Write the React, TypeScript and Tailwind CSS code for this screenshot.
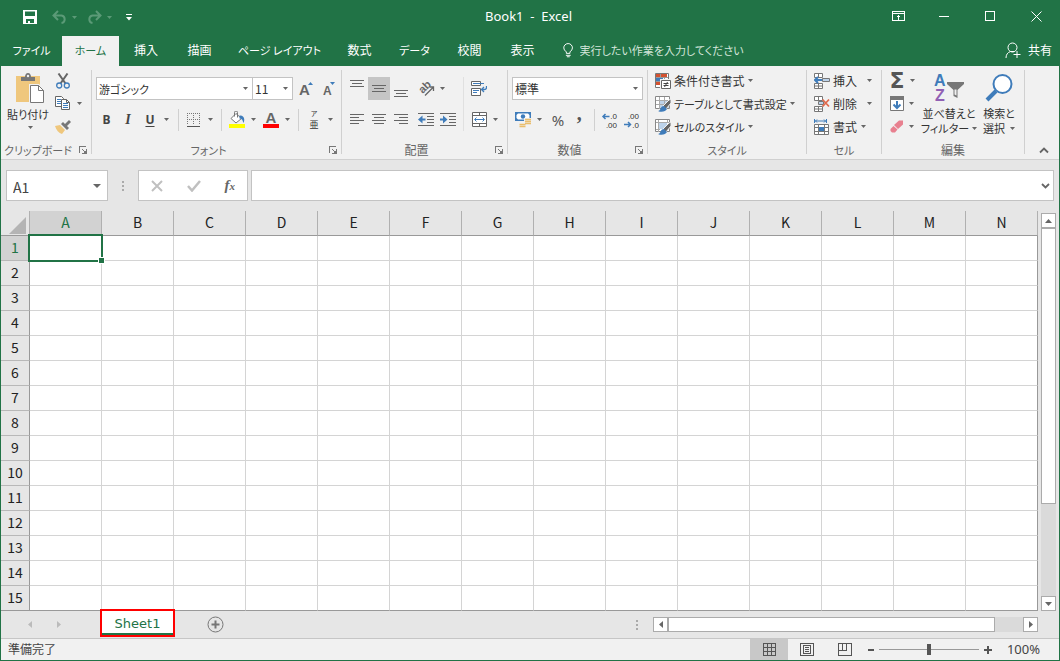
import React, { useState } from 'react';

const columns = ['A', 'B', 'C', 'D', 'E', 'F', 'G', 'H', 'I', 'J', 'K', 'L', 'M', 'N'];
const rows = Array.from({ length: 15 }, (_, i) => i + 1);

const tabs = [
  { name: 'ファイル', className: 'w-[61px] text-[11px]' },
  { name: 'ホーム', className: 'w-[57px] text-[11px]' },
  { name: '挿入', className: 'w-[54px]' },
  { name: '描画', className: 'w-[53px]' },
  { name: 'ページ レイアウト', className: 'w-[107px] text-[11px]' },
  { name: '数式', className: 'w-[53px]' },
  { name: 'データ', className: 'w-[57px] text-[11px]' },
  { name: '校閲', className: 'w-[53px]' },
  { name: '表示', className: 'w-[53px]' },
];

/* ---------- small parts ---------- */

const Caret: React.FC<{ className?: string }> = ({ className = 'text-[#666]' }) => (
  <svg width="5" height="3" viewBox="0 0 5 3" className={`shrink-0 ${className}`}>
    <path d="M0 0h5L2.5 3z" fill="currentColor" />
  </svg>
);

const CaretButton: React.FC<{ label: string; className?: string }> = ({ label, className = 'w-[11px]' }) => (
  <button aria-label={label} className={`flex h-[23px] shrink-0 items-center justify-center ${className}`}>
    <Caret />
  </button>
);

const IconButton: React.FC<{ label: string; className?: string; children: React.ReactNode }> = ({
  label,
  className = 'w-[22px]',
  children,
}) => (
  <button aria-label={label} className={`flex h-[23px] shrink-0 items-center justify-center ${className}`}>
    {children}
  </button>
);

const Divider: React.FC = () => <div className="h-[22px] w-px shrink-0 bg-[#d0d0d0]" />;

const Combo: React.FC<{ label: string; value: string; className: string }> = ({ label, value, className }) => (
  <div className={`relative h-[23px] shrink-0 ${className}`}>
    <select
      aria-label={label}
      defaultValue={value}
      className="h-full w-full appearance-none border border-[#c3c3c3] bg-white pl-0.5 text-[#333] outline-none"
    >
      <option>{value}</option>
    </select>
    <Caret className="pointer-events-none absolute top-[10px] right-[5px] text-[#666]" />
  </div>
);

const Group: React.FC<{
  name: string;
  className: string;
  nameClass?: string;
  launcher?: boolean;
  children: React.ReactNode;
}> = ({ name, className, nameClass = '', launcher, children }) => (
  <section aria-label={name} className={`flex shrink-0 ${className}`}>
    <div className="flex min-w-0 flex-1 flex-col">
      <div className="flex-1">{children}</div>
      <div className="flex h-4 items-center">
        <div className={`flex-1 text-center whitespace-nowrap text-[#666] ${launcher ? 'pr-1' : ''} ${nameClass}`}>
          {name}
        </div>
        {launcher && (
          <button aria-label={`${name}の設定`} className="mr-1 flex w-2 shrink-0 items-center">
            <svg width="8" height="8" viewBox="0 0 8 8" shapeRendering="crispEdges">
              <path d="M.5 7V.5H7M3 3l3 3" fill="none" stroke="#777" />
              <path d="M7 3h1v5H3V7h1l3-3z" fill="#777" />
            </svg>
          </button>
        )}
      </div>
    </div>
    <div className="mt-px h-[84px] w-px shrink-0 bg-[#d0d0d0]" />
  </section>
);

const Lines: React.FC<{ d: string }> = ({ d }) => (
  <svg width="14" height="18" viewBox="0 0 14 18" shapeRendering="crispEdges">
    <path d={d} stroke="#666" fill="none" />
  </svg>
);

/* ---------- icons ---------- */

const PasteIcon = () => (
  <svg width="28" height="31" viewBox="0 0 28 31" className="ml-1">
    <path d="M0 3h24v26H0z" fill="#efc77d" />
    <path d="M5 8V4h4c0-2 1-4 3-4s3 2 3 4h4v4z" fill="#777" />
    <circle cx="12" cy="3" r="1.2" fill="#f1f1f1" />
    <path d="M13 11h10l6 6v14H13z" fill="#f1f1f1" />
    <path d="M14.5 12.5h8l5 5v12h-13z" fill="#fff" stroke="#777" />
    <path d="M22.5 12.5v5h5" fill="none" stroke="#777" />
  </svg>
);

const CutIcon = () => (
  <svg width="14" height="16" viewBox="0 0 14 16">
    <path d="M2.5.5 9.5 10.5M11.5.5 4.5 10.5" stroke="#666" strokeWidth="2" />
    <circle cx="3.2" cy="12.5" r="2.5" fill="none" stroke="#3f7cba" strokeWidth="1.3" />
    <circle cx="10.8" cy="12.5" r="2.5" fill="none" stroke="#3f7cba" strokeWidth="1.3" />
  </svg>
);

const CopyIcon = () => (
  <svg width="16" height="15" viewBox="0 0 16 15">
    <path d="M.5.5h6l2 2v8h-8z" fill="#fff" stroke="#666" />
    <path d="M2 3.5h4M2 5.5h4M2 7.5h4" stroke="#3f7cba" />
    <path d="M6.5 3.5h5l3 3v7h-8z" fill="#fff" stroke="#666" />
    <path d="M11.5 3.5v3h3" fill="none" stroke="#666" />
    <path d="M8 7.5h5M8 9.5h5M8 11.5h5" stroke="#3f7cba" />
  </svg>
);

const BrushIcon = () => (
  <svg width="16" height="14" viewBox="0 0 16 14">
    <path d="m0 6 5-1 5 5-3 4C4 13 1 10 0 6z" fill="#efc77d" />
    <path d="m6 4 2-2 2 2 4-4 2 2-4 4 2 2-2 2z" fill="#777" />
  </svg>
);

const BordersIcon = () => (
  <svg width="14" height="14" viewBox="0 0 14 14" shapeRendering="crispEdges">
    <path d="M0 .5h13M0 6.5h13M.5 0v12M6.5 0v12M12.5 0v12" stroke="#777" strokeDasharray="1 1" fill="none" />
    <path d="M0 13.5h13" stroke="#555" />
  </svg>
);

const FillIcon = () => (
  <svg width="16" height="17" viewBox="0 0 16 17">
    <path d="m7 2.5 5.5 5L7 12 2 7.5z" fill="#fff" stroke="#777" />
    <path d="M5.5 5.5v-4a1.5 1.5 0 0 1 3 0v5" fill="none" stroke="#777" />
    <path d="M10.5 4.5c4-.5 6 3 4 7.5-1-2-.5-4-4-4.500z" fill="#3f7cba" />
    <path d="M0 13h16v4H0z" fill="#ffff00" />
  </svg>
);

const FontColorIcon = () => (
  <svg width="16" height="17" viewBox="0 0 16 17" className="overflow-visible">
    <text x="8" y="12" textAnchor="middle" fontSize="15" fontWeight="700" fill="#666" className="font-['Liberation_Sans']">
      A
    </text>
    <path d="M0 13h16v4H0z" fill="#f00" />
  </svg>
);

const OrientationIcon = () => (
  <svg width="17" height="16" viewBox="0 0 17 16" className="overflow-visible">
    <text x="3" y="13" fontSize="11" fontWeight="700" fill="#666" transform="rotate(-45 4 11)" className="font-['Liberation_Sans']">
      ab
    </text>
    <path d="M7 14.5 15 6.5M11.5 6h4v4" stroke="#666" strokeWidth="1.3" fill="none" />
  </svg>
);

const IndentIcon: React.FC<{ increase?: boolean }> = ({ increase }) => (
  <svg width="16" height="14" viewBox="0 0 16 14">
    <path d="M0 .5h16M9 3.5h7M9 6.5h7M9 9.5h7M0 12.5h16" stroke="#666" shapeRendering="crispEdges" />
    {increase ? (
      <path d="M0 5.5h3v-3l4.5 4L3 10.5v-3H0z" fill="#3f7cba" />
    ) : (
      <path d="M7.5 5.5h-3v-3L0 6.5l4.5 4v-3h3z" fill="#3f7cba" />
    )}
  </svg>
);

const WrapIcon = () => (
  <svg width="16" height="16" viewBox="0 0 16 16">
    <path d="M.5.5h9v4h-9zM.5 7.5h9v7h-9z" fill="#fff" stroke="#666" />
    <path d="M2 2.5h11M2 9.5h6M2 11.5h4" stroke="#3f7cba" />
    <path d="M15.5 5v1.5q0 2-2 2H11M13 6l-2.500 2.500L13 11" stroke="#3f7cba" strokeWidth="1.3" fill="none" />
  </svg>
);

const MergeIcon = () => (
  <svg width="15" height="15" viewBox="0 0 15 15">
    <path d="M.5.5h14v14H.5zM.5 3.5h14M.5 11.5h14M7.5.5v3M7.5 11.5v3" fill="#fff" stroke="#666" />
    <path d="M3 7.5h9M4.5 5.5l-2 2 2 2M10.5 5.5l2 2-2 2" stroke="#3f7cba" fill="none" />
  </svg>
);

const CurrencyIcon = () => (
  <svg width="17" height="16" viewBox="0 0 17 16">
    <path d="M0 0h16v9H0z" fill="#3f7cba" />
    <path d="M3 1.5h10L14.5 3v3L13 7.5H3L1.5 6V3z" fill="#fff" />
    <circle cx="8" cy="4.5" r="2.2" fill="#3f7cba" />
    <path d="M9 6h8v9H9zM4 10h7v6H4z" fill="#f1f1f1" />
    <path d="M10 7.5h6M10 9.5h6M10 11.5h6M4.5 12.5h6M4.5 14.5h6" stroke="#e9bd6c" strokeWidth="1.5" />
  </svg>
);

const DecimalIcon: React.FC<{ increase?: boolean }> = ({ increase }) => (
  <svg width="16" height="16" viewBox="0 0 16 16" className="overflow-visible font-['Liberation_Sans']" fontSize="8" fill="#333">
    <text x="15" y="7" textAnchor="end">
      {increase ? '.0' : '.00'}
    </text>
    <text x="15" y="16" textAnchor="end">
      {increase ? '.00' : '.0'}
    </text>
    {increase ? (
      <path d="M7.5 4.5H1M3.5 2 1 4.5 3.5 7" stroke="#3f7cba" strokeWidth="1.5" fill="none" />
    ) : (
      <path d="M0 12.5h6.5M4 10l2.5 2.5L4 15" stroke="#3f7cba" strokeWidth="1.5" fill="none" />
    )}
  </svg>
);

const ConditionalIcon = () => (
  <svg width="16" height="16" viewBox="0 0 16 16">
    <path d="M.5.5h13v14H.5z" fill="#fff" stroke="#777" />
    <path d="M1 4.5h12M1 8.5h12M5.5 1v13M9.5 1v13" stroke="#999" />
    <path d="M1 1h4v3H1zM6 1h6v3H6z" fill="#d35230" />
    <path d="M1 5h7v3H1z" fill="#3f7cba" />
    <path d="M1 9h4v3H1z" fill="#d35230" />
    <path d="M5 6h11v10H5z" fill="#f1f1f1" />
    <path d="M6.5 7.5h9v8h-9z" fill="#fff" stroke="#666" />
    <path d="M8.5 10.5h5M8.5 12.5h5M12.5 9l-3 5" stroke="#444" />
  </svg>
);

const StyleIcon: React.FC<{ table?: boolean }> = ({ table }) => (
  <svg width="16" height="16" viewBox="0 0 16 16">
    <path d="M.5.5h14v12H.5z" fill="#fff" stroke="#888" />
    {table ? <path d="M5 5h9v7H5z" fill="#bdd3ea" /> : <path d="M4 4h8v6H4z" fill="#bdd3ea" />}
    {table ? (
      <path d="M1 4.5h13M1 8.5h13M4.5 1v12M9.5 1v12" stroke="#aaa" />
    ) : (
      <path d="M1 3.5h13M3.5 1v12M12.5 1v3M1 10.5h4" stroke="#aaa" />
    )}
    <path d="M16 3v4l-5 6-3-3 6-6z" fill="#666" stroke="#f1f1f1" />
    <path d="M3 15c3 0 2-5 6-5l3 3c-1 2-5 4-9 2z" fill="#3f7cba" />
  </svg>
);

const InsertIcon = () => (
  <svg width="16" height="16" viewBox="0 0 16 16">
    <path d="M.5.5h8v4h-8zM4.5.5v4M.5 10.5h8v5h-8zM4.5 10.5v5M.5 13h8" fill="#fff" stroke="#777" />
    <path d="M8.5 5.5h7v3h-7z" fill="#bdd3ea" stroke="#777" />
    <path d="M8 7H1M4 4 1 7l3 3" stroke="#3f7cba" strokeWidth="2" fill="none" />
  </svg>
);

const DeleteIcon = () => (
  <svg width="16" height="16" viewBox="0 0 16 16">
    <path d="M.5.5h8v4h-8zM4.5.5v4M.5 10.5h8v5h-8zM4.5 10.5v5M.5 13h8" fill="#fff" stroke="#777" />
    <path d="M4.5 5.5h5v3h-5z" fill="#bdd3ea" stroke="#777" />
    <path d="m8.5 3.5 6.500 7M15 3.5l-6.500 7" stroke="#e0694c" strokeWidth="1.8" />
  </svg>
);

const FormatIcon = () => (
  <svg width="15" height="16" viewBox="0 0 15 16">
    <path d="M.5 5.500h14v10H.5zM.5 8.500h14M.5 12.500h14M4.500 5.500v10M10.500 5.500v10" fill="#fff" stroke="#777" />
    <path d="M5 8h5v4H5z" fill="#3f7cba" />
    <path d="M.5 0v4M12.5 0v4M1 2h11M3 .5 1.500 2 3 3.500M10 .5 11.500 2 10 3.500" stroke="#3f7cba" fill="none" />
  </svg>
);

const FillDownIcon = () => (
  <svg width="14" height="15" viewBox="0 0 14 15">
    <path d="M.5.5h13v14H.5z" fill="#fff" stroke="#777" />
    <path d="M0 0h14v4H0z" fill="#777" />
    <path d="M7 5v7M3.5 8.5 7 12l3.500-3.500" stroke="#3f7cba" strokeWidth="2" fill="none" />
  </svg>
);

const EraserIcon = () => (
  <svg width="14" height="13" viewBox="0 0 14 13">
    <path d="m4 5 5-4.500h4v4L8 9z" fill="#e8808f" />
    <path d="M3.5 6 7.5 9.500 5 12.500H2L.5 11V9z" fill="#e8808f" />
  </svg>
);

const SortFilterIcon = () => (
  <svg width="30" height="28" viewBox="0 0 30 28" className="overflow-visible font-['Liberation_Sans']" fontSize="16" fontWeight="700">
    <text x="0" y="12" fill="#3f7cba">
      A
    </text>
    <text x="1" y="27" fill="#9160b4">
      Z
    </text>
    <path d="M13 8h17v2l-6.500 6v8l-4-2v-6L13 10z" fill="#777" />
    <path d="M20.500 15.500h2v6l-2-1z" fill="#f1f1f1" />
  </svg>
);

const SearchIcon = () => (
  <svg width="28" height="28" viewBox="0 0 28 28">
    <path d="m11 17-9 9" stroke="#3f7cba" strokeWidth="4" />
    <circle cx="17.5" cy="10" r="9" fill="#fff" stroke="#3f7cba" strokeWidth="2" />
  </svg>
);

const Dots = () => (
  <svg width="2" height="10" viewBox="0 0 2 10" shapeRendering="crispEdges">
    <path d="M0 0h2v2H0zM0 4h2v2H0zM0 8h2v2H0z" fill="#aaa" />
  </svg>
);

/* ---------- sections ---------- */

const TitleBar = () => (
  <header className="grid h-[35px] shrink-0 grid-cols-[1fr_auto_1fr] text-white">
    <div className="flex h-8 items-center pl-[22px]">
      <button aria-label="上書き保存">
        <svg width="14" height="14" viewBox="0 0 14 14">
          <path d="M0 0h14v14H0zM2 1.5V6h10V1.5zM3 9v4h2v-2h2v2h4V9z" fill="#fff" fillRule="evenodd" />
        </svg>
      </button>
      <button aria-label="元に戻す" className="ml-[15px] flex items-center gap-[5px] text-[#5b9a77]">
        <svg width="15" height="14" viewBox="0 0 15 14">
          <path d="M6 1 1.5 5.5 6 10M2 5.5h7.500a3.800 3.800 0 0 1 0 7.500" fill="none" stroke="currentColor" strokeWidth="2" />
        </svg>
        <Caret className="text-[#5b9a77]" />
      </button>
      <button aria-label="やり直し" className="ml-[10px] flex items-center gap-[5px] text-[#5b9a77]">
        <svg width="15" height="14" viewBox="0 0 15 14">
          <path d="m9 1 4.500 4.500L9 10M13 5.500H5.500a3.800 3.800 0 0 0 0 7.500" fill="none" stroke="currentColor" strokeWidth="2" />
        </svg>
        <Caret className="text-[#5b9a77]" />
      </button>
      <button aria-label="クイック アクセス ツール バーのユーザー設定" className="ml-[14px]">
        <svg width="6" height="7" viewBox="0 0 6 7">
          <path d="M0 0h6v1H0zM0 3h6L3 6.5z" fill="#fff" />
        </svg>
      </button>
    </div>
    <h1 className="flex h-[30px] items-center pr-[3px] font-['Noto_Sans'] text-[13px] whitespace-pre">Book1  -  Excel</h1>
    <div className="flex h-[30px] justify-end">
      <button aria-label="リボンの表示オプション" className="flex w-[46px] items-center justify-center">
        <svg width="13" height="10" viewBox="0 0 13 10" shapeRendering="crispEdges">
          <path d="M.5.5h12v9H.5zM.5 2.5h12M6.5 4v5M4.5 6.5l2-2 2 2" fill="none" stroke="#fff" />
        </svg>
      </button>
      <button aria-label="最小化" className="flex w-[46px] items-center justify-center">
        <span className="h-px w-[10px] bg-white" />
      </button>
      <button aria-label="最大化" className="flex w-[46px] items-center justify-center">
        <span className="size-[10px] border border-white" />
      </button>
      <button aria-label="閉じる" className="flex w-[46px] items-center justify-center">
        <svg width="11" height="11" viewBox="0 0 11 11">
          <path d="m.5.5 10 10M10.5.5l-10 10" stroke="#fff" />
        </svg>
      </button>
    </div>
  </header>
);

const TabBar: React.FC = () => {
  const [active, setActive] = useState('ホーム');

  return (
    <nav className="flex h-[30px] shrink-0 text-white">
      {tabs.map((tab) => (
        <button
          key={tab.name}
          onClick={() => setActive(tab.name)}
          className={`shrink-0 pb-0.5 whitespace-nowrap ${tab.className} ${active === tab.name ? 'bg-[#f1f1f1] text-[#217346]' : ''}`}
        >
          {tab.name}
        </button>
      ))}
      <label className="ml-[14px] flex flex-1 items-center gap-[6px] pb-0.5">
        <svg width="11" height="15" viewBox="0 0 11 15">
          <path d="M3.5 10.5V9Q.8 7 .8 4.800a4.500 4.500 0 0 1 9 0Q9.800 7 7.200 9v1.500zM3 12.500h5M4 14h3" fill="none" stroke="#fff" />
        </svg>
        <input
          aria-label="操作アシスト"
          placeholder="実行したい作業を入力してください"
          className="w-full bg-transparent text-[11px] outline-none placeholder:text-[#d3e5da]"
        />
      </label>
      <button className="flex items-center gap-[7px] pr-[7px] pb-0.5">
        <svg width="16" height="17" viewBox="0 0 16 17">
          <circle cx="7.5" cy="5.5" r="4.5" fill="none" stroke="#fff" />
          <path d="M1 16q0-5 4.500-6.500h4M12 9v7M8.500 12.500h7" fill="none" stroke="#fff" />
        </svg>
        共有
      </button>
    </nav>
  );
};

const Ribbon = () => (
  <div className="flex h-[94px] shrink-0 overflow-hidden border-b border-[#d0d0d0] bg-[#f1f1f1] pt-[3px] pb-px text-[#333]">
    <Group name="クリップボード" nameClass="text-[11px]" launcher className="w-[91px]">
      <div className="flex">
        <button className="flex w-[54px] flex-col items-center pt-1">
          <PasteIcon />
          <span className="text-[11px] leading-[20px] whitespace-nowrap">貼り付け</span>
          <span className="flex h-[7px] items-center pl-1">
            <Caret />
          </span>
        </button>
        <div className="flex flex-col">
          <IconButton label="切り取り" className="w-4"><CutIcon /></IconButton>
          <div className="flex">
            <IconButton label="コピー" className="w-4"><CopyIcon /></IconButton>
            <CaretButton label="コピーのオプション" className="w-[16px]" />
          </div>
          <IconButton label="書式のコピー/貼り付け" className="w-4"><BrushIcon /></IconButton>
        </div>
      </div>
    </Group>

    <Group name="フォント" nameClass="text-[11px]" launcher className="w-[250px]">
      <div className="flex flex-col gap-2 pt-2 pl-1">
        <div className="flex">
          <Combo label="フォント" value="游ゴシック" className="w-[157px] text-[11px]" />
          <Combo label="フォント サイズ" value="11" className="-ml-px w-[41px] text-[12px]" />
          <IconButton label="フォント サイズの拡大" className="ml-0.5 w-6">
            <svg width="16" height="16" viewBox="0 0 16 16" className="overflow-visible">
              <text x="0" y="14" fontSize="15" fontWeight="700" fill="#666" className="font-['Liberation_Sans']">A</text>
              <path d="M9 4h5l-2.500-3z" fill="#3f7cba" />
            </svg>
          </IconButton>
          <IconButton label="フォント サイズの縮小">
            <svg width="14" height="16" viewBox="0 0 14 16" className="overflow-visible">
              <text x="0" y="14" fontSize="12" fontWeight="700" fill="#666" className="font-['Liberation_Sans']">A</text>
              <path d="M7 1h5L9.500 4z" fill="#3f7cba" />
            </svg>
          </IconButton>
        </div>
        <div className="flex items-center font-['Noto_Sans'] text-[#444]">
          <IconButton label="太字" className="w-[21px] font-bold">B</IconButton>
          <IconButton label="斜体" className="w-[22px] font-['Liberation_Serif'] text-[14px] font-bold italic">I</IconButton>
          <IconButton label="下線" className="w-[22px] font-bold underline underline-offset-2">U</IconButton>
          <CaretButton label="下線の種類" />
          <div className="w-[6px]" />
          <Divider />
          <IconButton label="罫線" className="w-[29px]"><BordersIcon /></IconButton>
          <CaretButton label="罫線の種類" className="w-[5px]" />
          <div className="w-[8px]" />
          <Divider />
          <IconButton label="塗りつぶしの色" className="w-[29px]"><FillIcon /></IconButton>
          <CaretButton label="塗りつぶしの色の選択" className="w-[5px]" />
          <IconButton label="フォントの色" className="w-[29px]"><FontColorIcon /></IconButton>
          <CaretButton label="フォントの色の選択" className="w-[5px]" />
          <div className="w-[8px]" />
          <Divider />
          <IconButton label="ふりがなの表示" className="w-[29px]">
            <svg width="10" height="18" viewBox="0 0 10 18" className="overflow-visible font-['Noto_Sans_CJK_JP']" fill="#333">
              <text x="5" y="5" textAnchor="middle" fontSize="7">ア</text>
              <text x="5" y="17" textAnchor="middle" fontSize="9">亜</text>
            </svg>
          </IconButton>
          <CaretButton label="ふりがなの設定" className="w-[5px]" />
        </div>
      </div>
    </Group>

    <Group name="配置" launcher className="w-[166px]">
      <div className="flex pt-2 pl-1">
        <div className="flex w-[117px] flex-col gap-2">
          <div className="flex">
            <IconButton label="上揃え"><Lines d="M0 .5h14M2 3.5h10M0 6.5h14" /></IconButton>
            <IconButton label="上下中央揃え" className="w-[22px] bg-[#c5c5c5]"><Lines d="M0 5.5h14M2 8.5h10M0 11.5h14" /></IconButton>
            <IconButton label="下揃え"><Lines d="M0 10.5h14M2 13.5h10M0 16.5h14" /></IconButton>
            <IconButton label="方向" className="w-[28px]"><OrientationIcon /></IconButton>
            <CaretButton label="方向の選択" className="w-[5px]" />
          </div>
          <div className="flex">
            <IconButton label="左揃え"><Lines d="M0 3.5h14M0 6.5h9M0 9.5h14M0 12.5h9" /></IconButton>
            <IconButton label="中央揃え"><Lines d="M0 3.5h14M2 6.5h10M0 9.5h14M2 12.5h10" /></IconButton>
            <IconButton label="右揃え"><Lines d="M0 3.5h14M5 6.5h9M0 9.5h14M5 12.5h9" /></IconButton>
            <IconButton label="インデントを減らす" className="w-[28px]"><IndentIcon /></IconButton>
            <IconButton label="インデントを増やす" className="w-[16px]"><IndentIcon increase /></IconButton>
          </div>
        </div>
        <div className="h-[54px] w-px bg-[#e0e0e0]" />
        <div className="flex flex-col gap-2 pl-[7px]">
          <IconButton label="折り返して全体を表示する" className="w-4"><WrapIcon /></IconButton>
          <div className="flex">
            <IconButton label="セルを結合して中央揃え" className="w-4"><MergeIcon /></IconButton>
            <CaretButton label="結合の種類" className="w-[16px]" />
          </div>
        </div>
      </div>
    </Group>

    <Group name="数値" launcher className="w-[140px]">
      <div className="flex flex-col gap-2 pt-2 pl-1">
        <Combo label="数値の書式" value="標準" className="w-[131px] text-[12px]" />
        <div className="flex items-center font-['Noto_Sans'] text-[#555]">
          <IconButton label="通貨表示形式"><CurrencyIcon /></IconButton>
          <CaretButton label="通貨の選択" />
          <IconButton label="パーセント スタイル" className="w-[26px] text-[15px]">%</IconButton>
          <IconButton label="桁区切りスタイル" className="w-[16px] pt-2 font-['Liberation_Serif'] text-[20px] font-bold">’</IconButton>
          <div className="w-[7px]" />
          <Divider />
          <IconButton label="小数点以下の表示桁数を増やす" className="w-[29px]"><DecimalIcon increase /></IconButton>
          <IconButton label="小数点以下の表示桁数を減らす" className="w-[16px]"><DecimalIcon /></IconButton>
        </div>
      </div>
    </Group>

    <Group name="スタイル" nameClass="text-[11px]" className="w-[159px]">
      <div className="flex flex-col items-start pl-[7px] whitespace-nowrap">
        <button className="flex h-[23px] items-center gap-[3px]"><ConditionalIcon />条件付き書式<Caret /></button>
        <button className="flex h-[23px] items-center gap-[3px] text-[11px]"><StyleIcon table />テーブルとして書式設定<Caret /></button>
        <button className="flex h-[23px] items-center gap-[3px] text-[11px]"><StyleIcon />セルのスタイル<Caret /></button>
      </div>
    </Group>

    <Group name="セル" nameClass="text-[11px]" className="w-[75px]">
      <div className="flex flex-col pl-[7px] whitespace-nowrap">
        <div className="flex">
          <button className="flex h-[23px] items-center gap-[3px]"><InsertIcon />挿入</button>
          <CaretButton label="挿入の種類" className="w-6" />
        </div>
        <div className="flex">
          <button className="flex h-[23px] items-center gap-[3px]"><DeleteIcon />削除</button>
          <CaretButton label="削除の種類" className="w-6" />
        </div>
        <button className="flex h-[23px] items-center gap-1"><FormatIcon />書式<Caret /></button>
      </div>
    </Group>

    <Group name="編集" className="w-[143px]">
      <div className="flex pl-[7px]">
        <div className="flex w-[33px] flex-col">
          <div className="flex">
            <IconButton label="オート SUM" className="w-4 font-['DejaVu_Sans'] text-[22px] font-bold text-[#555]">Σ</IconButton>
            <CaretButton label="集計の種類" className="w-[15px]" />
          </div>
          <div className="flex">
            <IconButton label="フィル" className="w-4"><FillDownIcon /></IconButton>
            <CaretButton label="フィルの種類" className="w-[13px]" />
          </div>
          <div className="flex">
            <IconButton label="クリア" className="w-4"><EraserIcon /></IconButton>
            <CaretButton label="クリアの種類" className="w-[13px]" />
          </div>
        </div>
        <button className="flex w-[54px] flex-col items-center pt-[5px] text-[11px] leading-[15px] whitespace-nowrap">
          <SortFilterIcon />
          <span className="pt-1">並べ替えと</span>
          <span className="flex items-center gap-[3px]">フィルター<Caret /></span>
        </button>
        <button className="flex w-[46px] flex-col items-center pt-[5px] text-[11px] leading-[15px] whitespace-nowrap">
          <SearchIcon />
          <span className="pt-1">検索と</span>
          <span className="flex items-center gap-[5px]">選択<Caret /></span>
        </button>
      </div>
    </Group>

    <div className="flex flex-1 items-end justify-end pr-[10px] pb-1">
      <button aria-label="リボンを折りたたむ">
        <svg width="10" height="7" viewBox="0 0 10 7">
          <path d="m1 5.500 4-4 4 4" stroke="#666" strokeWidth="1.8" fill="none" />
        </svg>
      </button>
    </div>
  </div>
);

const FormulaBar = () => (
  <div className="flex h-[51px] shrink-0 px-[5px] pt-[10px]">
    <div className="flex h-[31px] w-[102px] shrink-0 items-center border border-[#c3c3c3] bg-white">
      <input
        aria-label="名前ボックス"
        defaultValue="A1"
        className="w-0 flex-1 pt-0.5 pl-[6px] font-['Noto_Sans_CJK_JP'] text-[14px] text-[#444] outline-none"
      />
      <button aria-label="名前の一覧" className="flex w-5 justify-center">
        <svg width="8" height="4" viewBox="0 0 8 4">
          <path d="M0 0h8L4 4z" fill="#666" />
        </svg>
      </button>
    </div>
    <div className="flex h-[31px] w-[30px] shrink-0 items-center justify-center">
      <Dots />
    </div>
    <div className="flex h-[31px] w-[110px] shrink-0 items-center justify-around border border-[#c3c3c3] bg-white">
      <button aria-label="キャンセル">
        <svg width="12" height="12" viewBox="0 0 12 12">
          <path d="m1 1 10 10M11 1 1 11" stroke="#c0c0c0" strokeWidth="2" />
        </svg>
      </button>
      <button aria-label="入力">
        <svg width="14" height="12" viewBox="0 0 14 12">
          <path d="m1 6 4 4.500L13 1" stroke="#c0c0c0" strokeWidth="2.5" fill="none" />
        </svg>
      </button>
      <button aria-label="関数の挿入" className="font-['Liberation_Serif'] text-[15px] font-bold text-[#666] italic">
        f<span className="text-[11px]">x</span>
      </button>
    </div>
    <div className="ml-[3px] flex h-[31px] flex-1 items-center border border-[#c3c3c3] bg-white">
      <input aria-label="数式バー" className="h-full flex-1 px-2 outline-none" />
      <button aria-label="数式バーの展開" className="pr-[3px]">
        <svg width="9" height="6" viewBox="0 0 9 6">
          <path d="m1 1 3.500 3.500L8 1" stroke="#666" strokeWidth="1.8" fill="none" />
        </svg>
      </button>
    </div>
  </div>
);

const Sheet = () => (
  <div className="flex shrink-0">
    <div className="flex-1">
      <table className="w-full table-fixed border-separate border-spacing-0 font-['Noto_Sans_CJK_JP'] text-[14px] leading-[20px] text-[#222]">
        <thead>
          <tr className="h-[25px]">
            <th aria-label="すべて選択" className="w-[29px] border-r border-b border-[#b0b0b0] border-b-[#999] p-0">
              <svg width="17" height="17" viewBox="0 0 17 17" className="mt-1 ml-2">
                <path d="M17 0v17H0z" fill="#b4b4b4" />
              </svg>
            </th>
            {columns.map((column) => (
              <th
                key={column}
                scope="col"
                className={`border-r border-b border-r-[#b0b0b0] border-b-[#999] p-0 pb-0.5 font-normal ${
                  column === 'A' ? 'bg-[#d2d2d2] text-[#217346]' : ''
                }`}
              >
                {column}
              </th>
            ))}
          </tr>
        </thead>
        <tbody>
          {rows.map((row) => (
            <tr key={row} className="h-[25px]">
              <th
                scope="row"
                className={`border-r border-b border-r-[#999] p-0 pb-0.5 font-normal ${
                  row === 15 ? 'border-b-[#999]' : 'border-b-[#b8b8b8]'
                } ${row === 1 ? 'bg-[#d2d2d2] text-[#217346]' : ''}`}
              >
                {row}
              </th>
              {columns.map((column) => (
                <td
                  key={column}
                  className={`relative border-r border-b bg-white p-0 ${row === 15 ? 'border-b-[#999]' : 'border-b-[#d4d4d4]'} ${
                    column === 'N' ? 'border-r-[#999]' : 'border-r-[#d4d4d4]'
                  }`}
                >
                  {row === 1 && column === 'A' && (
                    <div className="absolute -inset-0.5 z-10 border-2 border-[#217346]">
                      <div className="absolute -right-[4px] -bottom-[4px] size-[7px] border border-white bg-[#217346]" />
                    </div>
                  )}
                </td>
              ))}
            </tr>
          ))}
        </tbody>
      </table>
    </div>
    <div className="flex w-[21px] shrink-0 flex-col px-[3px] pt-[2px]">
      <button aria-label="上へスクロール" className="flex h-[15px] items-center justify-center border border-[#ababab] bg-white">
        <svg width="7" height="4" viewBox="0 0 7 4"><path d="M0 4h7L3.500 0z" fill="#666" /></svg>
      </button>
      <div className="flex-1 bg-[#dadada]">
        <div className="h-3/4 border border-[#ababab] bg-white" />
      </div>
      <button aria-label="下へスクロール" className="flex h-[15px] items-center justify-center border border-[#ababab] bg-white">
        <svg width="7" height="4" viewBox="0 0 7 4"><path d="M0 0h7L3.500 4z" fill="#666" /></svg>
      </button>
    </div>
  </div>
);

const SheetBar = () => (
  <div className="flex h-7 shrink-0 border-b border-[#c6c6c6]">
    <div className="flex w-[99px] shrink-0 items-center gap-[25px] pl-[27px]">
      <button aria-label="前のシート">
        <svg width="4" height="7" viewBox="0 0 4 7"><path d="M4 0v7L0 3.500z" fill="#bbb" /></svg>
      </button>
      <button aria-label="次のシート">
        <svg width="4" height="7" viewBox="0 0 4 7"><path d="M0 0v7l4-3.500z" fill="#bbb" /></svg>
      </button>
    </div>
    <div className="z-10 -mt-0.5 h-7 w-[75px] shrink-0 border-2 border-[#f00] bg-white">
      <button className="h-full w-full border-b-2 border-[#217346] pt-1 font-['DejaVu_Sans'] text-[13px] text-[#217346]">Sheet1</button>
    </div>
    <button aria-label="新しいシート" className="ml-8">
      <svg width="17" height="17" viewBox="0 0 17 17">
        <circle cx="8.5" cy="8.5" r="7.5" fill="none" stroke="#777" />
        <path d="M8.5 4.5v8M4.5 8.5h8" stroke="#777" strokeWidth="2" />
      </svg>
    </button>
    <div className="flex flex-1 items-center justify-end pr-[15px]"><Dots /></div>
    <div className="mt-[6px] mr-[21px] flex h-[15px] w-[385px] shrink-0 bg-[#dadada]">
      <button aria-label="左へスクロール" className="flex w-[15px] items-center justify-center border border-[#ababab] bg-white">
        <svg width="4" height="7" viewBox="0 0 4 7"><path d="M4 0v7L0 3.500z" fill="#666" /></svg>
      </button>
      <div className="flex-1">
        <div className="h-full w-[92%] border border-[#ababab] bg-white" />
      </div>
      <button aria-label="右へスクロール" className="flex w-[15px] items-center justify-center border border-[#ababab] bg-white">
        <svg width="4" height="7" viewBox="0 0 4 7"><path d="M0 0v7l4-3.500z" fill="#666" /></svg>
      </button>
    </div>
  </div>
);

const StatusBar: React.FC = () => {
  const [zoom, setZoom] = useState(100);

  return (
    <footer className="flex min-h-[21px] flex-1 items-stretch bg-[#f1f1f1] text-[#444]">
      <div className="flex flex-1 items-center pb-px pl-[7px]">準備完了</div>
      <button aria-label="標準" className="flex w-[38px] items-center justify-center bg-[#c8c8c8]">
        <svg width="13" height="13" viewBox="0 0 13 13" shapeRendering="crispEdges">
          <path d="M.5.5h12v12H.5zM4.5 0v13M8.5 0v13M0 4.5h13M0 8.5h13" fill="none" stroke="#555" />
        </svg>
      </button>
      <button aria-label="ページ レイアウト" className="flex w-[38px] items-center justify-center">
        <svg width="14" height="13" viewBox="0 0 14 13" shapeRendering="crispEdges">
          <path d="M.5.5h13v12H.5zM3.5 2.5h7v8h-7zM5 4.5h4M5 6.5h4M5 8.5h4" fill="none" stroke="#555" />
        </svg>
      </button>
      <button aria-label="改ページ プレビュー" className="flex w-[38px] items-center justify-center">
        <svg width="14" height="13" viewBox="0 0 14 13" shapeRendering="crispEdges">
          <path d="M.5.5h13v12H.5zM4.5.5v7M.5 7.5h8M8.5.5v7" fill="none" stroke="#555" />
        </svg>
      </button>
      <button aria-label="縮小" className="ml-1 flex w-[8px] items-center">
        <span className="h-0.5 w-[6px] bg-[#555]" />
      </button>
      <input
        type="range"
        aria-label="ズーム"
        min={0}
        max={200}
        value={zoom}
        onChange={(e) => setZoom(Number(e.target.value))}
        className="mx-[3px] w-[100px] appearance-none bg-transparent [&::-webkit-slider-runnable-track]:h-px [&::-webkit-slider-runnable-track]:bg-[#999] [&::-webkit-slider-thumb]:-mt-[5px] [&::-webkit-slider-thumb]:h-[11px] [&::-webkit-slider-thumb]:w-1 [&::-webkit-slider-thumb]:appearance-none [&::-webkit-slider-thumb]:bg-[#555]"
      />
      <button aria-label="拡大" className="flex w-[10px] items-center justify-end">
        <svg width="8" height="8" viewBox="0 0 8 8"><path d="M4 0v8M0 4h8" stroke="#555" strokeWidth="2" /></svg>
      </button>
      <button className="w-[67px] pr-1 pb-px text-center font-['Noto_Sans'] text-[13px]">{zoom}%</button>
    </footer>
  );
};

const App: React.FC = () => (
  <div className="flex h-screen flex-col overflow-hidden border border-[#217346] bg-[#e6e6e6] font-['Noto_Sans_CJK_JP',sans-serif] text-[12px] leading-[16px] [font-feature-settings:'palt']">
    <div className="shrink-0 bg-[#217346]">
      <TitleBar />
      <TabBar />
    </div>
    <Ribbon />
    <FormulaBar />
    <Sheet />
    <SheetBar />
    <StatusBar />
  </div>
);

export default App;
